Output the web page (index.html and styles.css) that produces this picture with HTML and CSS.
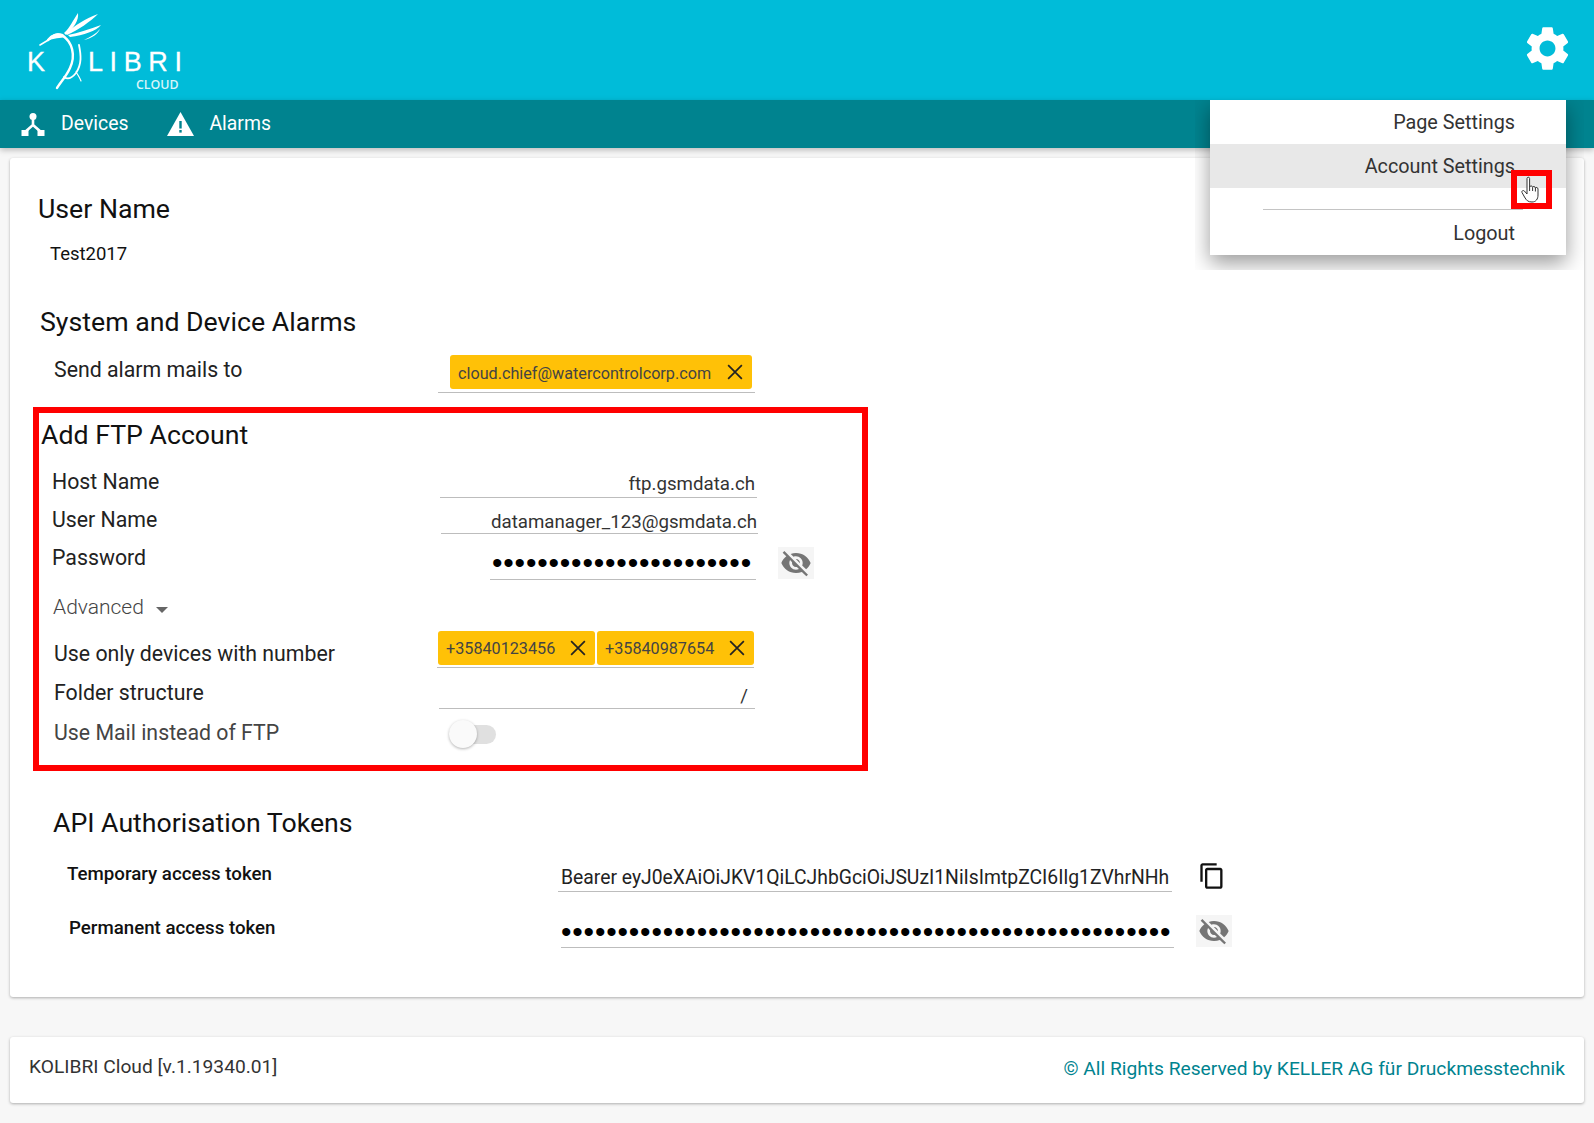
FILE: index.html
```html
<!DOCTYPE html>
<html>
    <head>
        <title>KOLIBRI Cloud</title>
        <link rel="stylesheet" href="styles.css">
    </head>
    <body>
        <header class="topbar">
            <svg class="logo" width="190" height="100" viewBox="0 0 190 100">
                <g fill="none" stroke="#fff" stroke-linecap="round">
                    <path d="M40 45 L50 39" stroke-width="1.6"/>
                    <path d="M48 40 C52 35 58 33 63 36 C72 42 76 55 70 68 C66 77 59 84 57 88" stroke-width="2.4"/>
                    <path d="M79 45 C81 55 82 64 76 73 C72 78 68 80 64 77" stroke-width="1.8"/>
                    <path d="M76 72 C78 75 80 78 81 81" stroke-width="1.2"/>
                </g>
                <g fill="#fff">
                    <path d="M47 41 C50 34 58 32 63 34 L66 37 C60 38 54 38 47 41Z"/>
                    <path d="M64 33 C70 28 73 20 78 13 C79 20 74 28 66 35Z"/>
                    <path d="M66 33 C74 26 86 18 98 14 C90 22 78 30 67 35Z"/>
                    <path d="M68 35 C78 33 90 29 101 25 C96 31 84 35 70 37Z"/>
                    <path d="M84 40 C90 37 96 34 100 29 C98 34 92 38 84 40Z"/>
                </g>
                <text class="logo-big" x="27" y="71">K</text>
                <text class="logo-big logo-spaced" x="88" y="71">LIBRI</text>
                <text class="logo-small" x="136" y="89">CLOUD</text>
            </svg>
            <svg class="gear" width="53" height="53" viewBox="0 0 24 24"><path fill="#fff" d="M19.14 12.94c.04-.3.06-.61.06-.94 0-.32-.02-.64-.07-.94l2.03-1.58c.18-.14.23-.41.12-.61l-1.92-3.32c-.12-.22-.37-.29-.59-.22l-2.39.96c-.5-.38-1.03-.7-1.62-.94l-.36-2.54c-.04-.24-.24-.41-.48-.41h-3.84c-.24 0-.43.17-.47.41l-.36 2.54c-.59.24-1.13.57-1.62.94l-2.39-.96c-.22-.08-.47 0-.59.22L2.74 8.87c-.12.21-.08.47.12.61l2.03 1.58c-.05.3-.09.63-.09.94s.02.64.07.94l-2.03 1.58c-.18.14-.23.41-.12.61l1.92 3.32c.12.22.37.29.59.22l2.39-.96c.5.38 1.03.7 1.62.94l.36 2.54c.05.24.24.41.48.41h3.84c.24 0 .44-.17.47-.41l.36-2.54c.59-.24 1.13-.56 1.62-.94l2.39.96c.22.08.47 0 .59-.22l1.92-3.32c.12-.22.07-.47-.12-.61l-2.01-1.58zM12 15.6c-1.98 0-3.6-1.62-3.6-3.6s1.62-3.6 3.6-3.6 3.6 1.62 3.6 3.6-1.62 3.6-3.6 3.6z"/></svg>
        </header>
        <nav class="navbar">
            <a class="nav-item nav-devices">
                <svg width="24" height="24" viewBox="0 0 24 24"><g fill="#fff"><circle cx="12" cy="4.5" r="3.5"/><rect x="0.5" y="18" width="7" height="6"/><rect x="16.5" y="18" width="7" height="6"/></g><path d="M12 6 V13 L4 20 M12 13 L20 20" fill="none" stroke="#fff" stroke-width="2.6"/></svg>
                <span>Devices</span>
            </a>
            <a class="nav-item nav-alarms">
                <svg width="27" height="24" viewBox="0 0 27 24"><path fill="#fff" d="M13.5 0 L27 24 H0Z"/><rect x="12.3" y="9" width="2.4" height="7.5" fill="#00838f"/><rect x="12.3" y="18" width="2.4" height="2.6" fill="#00838f"/></svg>
                <span>Alarms</span>
            </a>
        </nav>

        <main class="card">
            <h2 class="title title-user">User Name</h2>
            <div class="username">Test2017</div>

            <h2 class="title title-alarms">System and Device Alarms</h2>
            <div class="row row-mails">
                <div class="label">Send alarm mails to</div>
                <div class="field chips">
                    <span class="chip chip-mail">cloud.chief@watercontrolcorp.com<svg class="x" viewBox="0 0 14 14"><path d="M1 1 L13 13 M13 1 L1 13"/></svg></span>
                </div>
            </div>

            <section class="ftp">
                <h2 class="title">Add FTP Account</h2>
                <div class="row row-host">
                    <div class="label">Host Name</div>
                    <div class="field">ftp.gsmdata.ch</div>
                </div>
                <div class="row row-ftpuser">
                    <div class="label">User Name</div>
                    <div class="field">datamanager_123@gsmdata.ch</div>
                </div>
                <div class="row row-pass">
                    <div class="label">Password</div>
                    <div class="field dots">•••••••••••••••••••••••</div>
                    <span class="eye"><svg width="32" height="32" viewBox="0 0 24 24"><path fill="#757575" d="M12 7c2.76 0 5 2.24 5 5 0 .65-.13 1.26-.36 1.83l2.92 2.92c1.51-1.26 2.7-2.89 3.43-4.75-1.73-4.39-6-7.5-11-7.5-1.4 0-2.74.25-3.98.7l2.16 2.16C10.74 7.13 11.35 7 12 7zM2 4.27l2.28 2.28.46.46C3.08 8.3 1.78 10.02 1 12c1.73 4.39 6 7.5 11 7.5 1.55 0 3.03-.3 4.38-.84l.42.42L19.73 22 21 20.73 3.27 3 2 4.27zM7.53 9.8l1.55 1.55c-.05.21-.08.43-.08.65 0 1.66 1.34 3 3 3 .22 0 .44-.03.65-.08l1.55 1.55c-.67.33-1.41.53-2.2.53-2.76 0-5-2.24-5-5 0-.79.2-1.53.53-2.2zm4.31-.78l3.15 3.15.02-.16c0-1.66-1.34-3-3-3l-.17.01z"/></svg></span>
                </div>
                <div class="advanced">Advanced<span class="caret"></span></div>
                <div class="row row-numbers">
                    <div class="label">Use only devices with number</div>
                    <div class="field chips">
                        <span class="chip chip-num">+35840123456<svg class="x" viewBox="0 0 14 14"><path d="M1 1 L13 13 M13 1 L1 13"/></svg></span>
                        <span class="chip chip-num">+35840987654<svg class="x" viewBox="0 0 14 14"><path d="M1 1 L13 13 M13 1 L1 13"/></svg></span>
                    </div>
                </div>
                <div class="row row-folder">
                    <div class="label">Folder structure</div>
                    <div class="field">/</div>
                </div>
                <div class="row row-mail">
                    <div class="label">Use Mail instead of FTP</div>
                    <div class="toggle"><span class="knob"></span></div>
                </div>
            </section>

            <h2 class="title title-api">API Authorisation Tokens</h2>
            <div class="row row-temp">
                <div class="label">Temporary access token</div>
                <div class="field token"><span class="token-text">Bearer eyJ0eXAiOiJKV1QiLCJhbGciOiJSUzI1NiIsImtpZCI6Ilg1ZVhrNHh5</span></div>
                <svg class="copy" width="28" height="28" viewBox="0 0 24 24"><path fill="#111" d="M16 1H4c-1.1 0-2 .9-2 2v14h2V3h12V1zm3 4H8c-1.1 0-2 .9-2 2v14c0 1.1.9 2 2 2h11c1.1 0 2-.9 2-2V7c0-1.1-.9-2-2-2zm0 16H8V7h11v14z"/></svg>
            </div>
            <div class="row row-perm">
                <div class="label">Permanent access token</div>
                <div class="field dots">••••••••••••••••••••••••••••••••••••••••••••••••••••••</div>
                <span class="eye"><svg width="32" height="32" viewBox="0 0 24 24"><path fill="#757575" d="M12 7c2.76 0 5 2.24 5 5 0 .65-.13 1.26-.36 1.83l2.92 2.92c1.51-1.26 2.7-2.89 3.43-4.75-1.73-4.39-6-7.5-11-7.5-1.4 0-2.74.25-3.98.7l2.16 2.16C10.74 7.13 11.35 7 12 7zM2 4.27l2.28 2.28.46.46C3.08 8.3 1.78 10.02 1 12c1.73 4.39 6 7.5 11 7.5 1.55 0 3.03-.3 4.38-.84l.42.42L19.73 22 21 20.73 3.27 3 2 4.27zM7.53 9.8l1.55 1.55c-.05.21-.08.43-.08.65 0 1.66 1.34 3 3 3 .22 0 .44-.03.65-.08l1.55 1.55c-.67.33-1.41.53-2.2.53-2.76 0-5-2.24-5-5 0-.79.2-1.53.53-2.2zm4.31-.78l3.15 3.15.02-.16c0-1.66-1.34-3-3-3l-.17.01z"/></svg></span>
            </div>
        </main>

        <footer class="footer">
            <span class="version">KOLIBRI Cloud [v.1.19340.01]</span>
            <span class="rights">© All Rights Reserved by KELLER AG für Druckmesstechnik</span>
        </footer>

        <!-- settings menu, clipped like in the screenshot -->
        <div class="menu-clip">
            <div class="menu">
                <div class="menu-item">Page Settings</div>
                <div class="menu-item active">Account Settings</div>
                <div class="menu-divider"></div>
                <div class="menu-item">Logout</div>
            </div>
        </div>
        <div class="cursor-box">
            <svg width="22" height="28" viewBox="0 0 22 28"><path fill="#fff" stroke="#333" stroke-width="1" stroke-linejoin="round" d="M6 2.5 C6 0.8 8.6 0.8 8.6 2.5 V11 C9 9.5 11.4 9.5 11.6 11.3 C12 10 14.2 10.2 14.4 12 C15 11 17 11.4 17 13 V19 C17 23 15 26 11 26 C7 26 5.5 24.5 3.5 21 L1 16.5 C0.3 15 2.2 13.8 3.4 15 L6 18 Z"/><path d="M8.6 11 V15 M11.6 11.3 V15 M14.4 12 V15.5" stroke="#333" stroke-width="1" fill="none"/></svg>
        </div>
    </body>
</html>
```

FILE: styles.css
```css
* {
    box-sizing: border-box;
}
body {
    margin: 0;
    width: 1594px;
    height: 1123px;
    overflow: hidden;
    background: #f7f7f7;
    color: #212121;
    font-family: Roboto, sans-serif;
    font-size: 21.3px;
    position: relative;
}

/* header */
.topbar {
    height: 100px;
    background: #00bcd9;
    display: flex;
    justify-content: space-between;
    align-items: center;
    padding-right: 20px;
}
.logo {
    display: block;
}
.logo-big {
    fill: #fff;
    stroke: #fff;
    stroke-width: .3;
    font-family: "Liberation Sans", sans-serif;
    font-size: 27px;
}
.logo-spaced {
    letter-spacing: 6.6px;
}
.logo-small {
    fill: #d8f4f8;
    font-family: "Open Sans", sans-serif;
    font-size: 12.4px;
    font-weight: 600;
}
.gear {
    display: block;
    margin-top: -3px;
}
.navbar {
    height: 48px;
    background: #00838f;
    box-shadow: 0 2px 6px rgba(0, 0, 0, .25);
    display: flex;
    align-items: center;
    color: #fff;
    font-size: 19.4px;
    position: relative;
}
.nav-item {
    display: flex;
    align-items: center;
}
.nav-item span {
    margin-top: -1px;
}
.nav-devices {
    margin-left: 21px;
}
.nav-devices span {
    margin-left: 16px;
}
.nav-alarms {
    margin-left: 39px;
}
.nav-alarms span {
    margin-left: 15px;
}

/* main card */
.card {
    margin: 10px 10px 0;
    width: 1574px;
    height: 839px;
    padding-top: 36px;
    background: #fff;
    border-radius: 3px;
    box-shadow: 0 1px 3px rgba(0, 0, 0, .3);
}
.title {
    margin: 0;
    font-size: 26.7px;
    font-weight: 400;
    line-height: 30px;
    color: #111;
}
.title-user {
    margin-left: 28px;
}
.username {
    margin: 18px 0 0 40px;
    line-height: 24px;
    font-size: 18.5px;
    color: #111;
}
.title-alarms {
    margin: 41px 0 0 30px;
}
.title-api {
    margin: 37px 0 0 43px;
}

.row {
    display: flex;
    align-items: flex-start;
}
.label {
    line-height: 28px;
    color: #222;
    flex: none;
}
.field {
    flex: none;
    display: flex;
    justify-content: flex-end;
    align-items: flex-end;
    line-height: 24px;
    font-size: 18.7px;
    color: #333;
    border-bottom: 1px solid #bdbdbd;
}
.dots {
    justify-content: flex-start;
    align-items: flex-start;
    color: #000;
    font-family: "Liberation Sans", sans-serif;
    font-size: 30px;
    letter-spacing: .8px;
    white-space: nowrap;
    overflow: hidden;
    padding-top: 7px;
}
.chips {
    justify-content: flex-start;
    align-items: flex-start;
    gap: 2px;
}
.chip {
    height: 34px;
    display: flex;
    align-items: center;
    justify-content: space-between;
    background: #ffc107;
    border-radius: 3px;
    color: #444;
    font-size: 16.2px;
    padding: 2px 9px 0 8px;
}
.x {
    width: 16px;
    height: 16px;
    margin-top: -3px;
    fill: none;
    stroke: #222;
    stroke-width: 1.5;
}
.chip-mail {
    width: 302px;
    margin-left: 12px;
    padding-top: 3px;
}
.chip-num {
    width: 157px;
}

.row-mails {
    margin: 18px 0 0 44px;
    height: 38px;
}
.row-mails .label {
    width: 384px;
    margin-top: 1px;
}
.row-mails .field {
    width: 317px;
    height: 38px;
}

/* annotated ftp section */
.ftp {
    width: 835px;
    height: 364px;
    margin: 14px 0 0 23px;
    padding-top: 7px;
    border: 6px solid #f00;
}
.ftp .title {
    margin-left: 2px;
}
.row-host {
    margin: 18px 0 0 13px;
}
.row-host .label {
    width: 388px;
}
.row-host .field {
    width: 317px;
    height: 30px;
    padding: 0 2px 1px 0;
}
.row-ftpuser {
    margin: 8px 0 0 13px;
}
.row-ftpuser .label {
    width: 389px;
}
.row-ftpuser .field {
    width: 317px;
    height: 28px;
    padding-right: 1px;
    line-height: 22px;
}
.row-pass {
    margin: 10px 0 0 13px;
}
.row-pass .label {
    width: 438px;
}
.row-pass .field {
    width: 266px;
    height: 36px;
    padding-left: 2px;
}
.eye {
    flex: none;
    width: 36px;
    height: 32px;
    margin: 3px 0 0 22px;
    background: #f5f5f5;
    display: flex;
    align-items: center;
    justify-content: center;
}
.advanced {
    margin: 15px 0 0 14px;
    line-height: 24px;
    font-size: 21px;
    font-weight: 300;
    color: #444;
    display: flex;
    align-items: center;
}
.caret {
    margin: 5px 0 0 12px;
    border-top: 6px solid #666;
    border-left: 6px solid transparent;
    border-right: 6px solid transparent;
}
.row-numbers {
    margin: 12px 0 0 15px;
}
.row-numbers .label {
    width: 383px;
    margin-top: 9px;
}
.row-numbers .field {
    width: 317px;
    height: 37px;
    padding-left: 1px;
}
.row-folder {
    margin: 11px 0 0 15px;
}
.row-folder .label {
    width: 385px;
}
.row-folder .field {
    width: 316px;
    height: 30px;
    padding-right: 7px;
}
.row-mail {
    margin: 10px 0 0 15px;
}
.row-mail .label {
    width: 395px;
    color: #444;
}
.toggle {
    position: relative;
    width: 47px;
    height: 19px;
    margin-top: 6px;
    background: #e0e0e0;
    border-radius: 10px;
}
.knob {
    position: absolute;
    left: 0;
    top: -5px;
    width: 28px;
    height: 28px;
    border-radius: 50%;
    background: #fafafa;
    box-shadow: 0 1px 3px rgba(0, 0, 0, .3);
}

/* tokens */
.row-temp {
    margin: 22px 0 0 57px;
}
.row-temp .label,
.row-perm .label {
    font-size: 18.7px;
    font-weight: 500;
    color: #111;
}
.row-temp .label {
    width: 491px;
}
.token {
    width: 614px;
    height: 32px;
    padding: 0 2px 1px 3px;
    justify-content: flex-start;
    font-size: 19.33px;
    color: #222;
}
.token-text {
    display: block;
    width: 100%;
    white-space: nowrap;
    overflow: hidden;
}
.copy {
    flex: none;
    margin: 2px 0 0 26px;
}
.row-perm {
    margin: 22px 0 0 59px;
}
.row-perm .label {
    width: 492px;
}
.row-perm .field {
    width: 613px;
    height: 34px;
    padding-top: 6px;
}
.row-perm .eye {
    margin: 1px 0 0 22px;
}

/* footer */
.footer {
    margin: 40px 10px 0;
    width: 1574px;
    height: 66px;
    padding: 0 19px;
    background: #fff;
    border-radius: 3px;
    box-shadow: 0 1px 3px rgba(0, 0, 0, .3);
    display: flex;
    justify-content: space-between;
    align-items: center;
    font-size: 19.2px;
}
.version {
    color: #333;
    margin-top: -8px;
}
.rights {
    color: #00838f;
    margin-top: -4px;
}

/* settings dropdown */
.menu-clip {
    position: absolute;
    left: 1195px;
    top: 100px;
    width: 389px;
    height: 170px;
    overflow: hidden;
}
.menu {
    margin: 0 0 0 15px;
    width: 356px;
    height: 155px;
    background: #fff;
    box-shadow: 0 8px 20px rgba(0, 0, 0, .4);
}
.menu-item {
    height: 44px;
    padding: 1px 51px 0 0;
    text-align: right;
    line-height: 44px;
    color: #333;
    font-size: 19.8px;
}
.menu-item.active {
    background: #e8e8e8;
}
.menu-divider {
    height: 1px;
    margin: 21px 0 0 53px;
    width: 260px;
    background: #c4c4c4;
}
.menu-divider + .menu-item {
    padding-top: 2px;
}
.cursor-box {
    position: absolute;
    left: 1511px;
    top: 170px;
    width: 41px;
    height: 39px;
    border: 6px solid #f00;
    display: flex;
    justify-content: center;
    align-items: center;
}
```
